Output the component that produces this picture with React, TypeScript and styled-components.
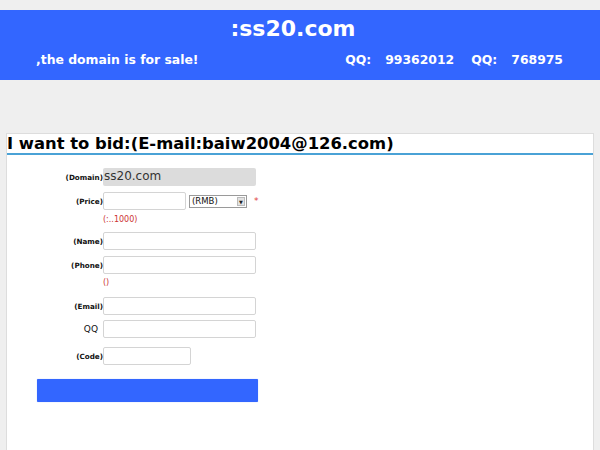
import React from "react";
import styled, { createGlobalStyle } from "styled-components";

const GlobalStyle = createGlobalStyle`
  html, body {
    margin: 0;
    padding: 0;
    background: #efefef;
    font-family: "DejaVu Sans", Verdana, sans-serif;
  }
`;

const Page = styled.div`
  padding-top: 10px;
  min-height: 440px;
`;

const Header = styled.header`
  background: #3366ff;
  height: 70px;
  color: #fff;
  display: flex;
  flex-direction: column;
`;

const SiteTitle = styled.h1`
  margin: 0;
  padding: 4px 14px 0 0;
  height: 30px;
  font-size: 22px;
  line-height: 30px;
  font-weight: bold;
  text-align: center;
`;

const InfoBar = styled.div`
  display: flex;
  justify-content: space-between;
  align-items: center;
  padding: 8px 37px 0 36px;
  font-size: 12.4px;
  font-weight: bold;
`;

const Contacts = styled.div`
  display: flex;
  gap: 17px;
`;

const Contact = styled.span`
  display: flex;
  gap: 14px;
`;

const Panel = styled.section`
  margin: 53px 6px 0 6px;
  background: #fff;
  border: 1px solid #dddddd;
  border-bottom: none;
  min-height: 320px;
`;

const PanelTitle = styled.h2`
  margin: 0;
  padding: 1px 0 0 0;
  font-size: 16.4px;
  line-height: 18px;
  font-weight: bold;
  color: #000;
  border-bottom: 2px solid #4aa2d6;
`;

const Form = styled.form`
  display: flex;
  flex-direction: column;
  padding: 13px 0 0 0;
`;

const Row = styled.div<{ $top?: number }>`
  display: grid;
  grid-template-columns: 96px auto;
  align-items: center;
  margin-top: ${({ $top }) => $top ?? 6}px;
`;

const Label = styled.label<{ $plain?: boolean }>`
  text-align: right;
  font-size: ${({ $plain }) => ($plain ? "9px" : "7.2px")};
  font-weight: ${({ $plain }) => ($plain ? "normal" : "bold")};
  color: #111;
  padding-right: ${({ $plain }) => ($plain ? "5px" : "0")};
`;

const Field = styled.div`
  display: flex;
  align-items: center;
  gap: 3px;
`;

const Input = styled.input<{ $w?: number }>`
  box-sizing: border-box;
  width: ${({ $w }) => $w ?? 153}px;
  height: 18px;
  margin: 0;
  padding: 0 2px;
  border: 1px solid #d4d4d4;
  border-radius: 2px;
  background: #fff;
  font-family: "DejaVu Sans", sans-serif;
  font-size: 11px;
  outline: none;
`;

const ReadOnly = styled.div`
  box-sizing: border-box;
  width: 153px;
  height: 18px;
  padding-left: 1px;
  background: #dcdcdc;
  border-radius: 2px;
  font-size: 12px;
  line-height: 17px;
  color: #333;
`;

const SelectBox = styled.div`
  box-sizing: border-box;
  width: 58px;
  height: 13px;
  border: 1px solid #9a9a9a;
  display: flex;
  align-items: center;
  background: #fff;
`;

const SelectText = styled.span`
  flex: 1;
  font-size: 8.5px;
  padding-left: 2px;
  color: #111;
`;

const SelectArrow = styled.span`
  width: 8px;
  height: 9px;
  margin-right: 1px;
  background: #e2e2e2;
  border: 1px solid #bbb;
  box-sizing: border-box;
  font-size: 5px;
  line-height: 8px;
  text-align: center;
  color: #222;
`;

const Star = styled.span`
  color: #e04040;
  font-size: 9px;
  margin-left: 4px;
`;

const Hint = styled.div<{ $top?: number }>`
  margin: ${({ $top }) => $top ?? 3}px 0 0 96px;
  font-size: 8px;
  line-height: 10px;
  color: #cc3333;
  height: 10px;
`;

const Submit = styled.button`
  margin: 14px 0 0 30px;
  width: 221px;
  height: 23px;
  border: none;
  border-radius: 1px;
  background: #3366ff;
  box-shadow: 0 0 1px #8aa8ff;
  cursor: pointer;
`;

export default function App() {
  return (
    <Page>
      <GlobalStyle />
      <Header>
        <SiteTitle>:ss20.com</SiteTitle>
        <InfoBar>
          <span>,the domain is for sale!</span>
          <Contacts>
            <Contact>
              <span>QQ:</span>
              <span>99362012</span>
            </Contact>
            <Contact>
              <span>QQ:</span>
              <span>768975</span>
            </Contact>
          </Contacts>
        </InfoBar>
      </Header>
      <Panel>
        <PanelTitle>I want to bid:(E-mail:baiw2004@126.com)</PanelTitle>
        <Form onSubmit={(e) => e.preventDefault()}>
          <Row $top={0}>
            <Label>(Domain)</Label>
            <ReadOnly>ss20.com</ReadOnly>
          </Row>
          <Row>
            <Label>(Price)</Label>
            <Field>
              <Input $w={83} />
              <SelectBox>
                <SelectText>(RMB)</SelectText>
                <SelectArrow>▼</SelectArrow>
              </SelectBox>
              <Star>*</Star>
            </Field>
          </Row>
          <Hint $top={5}>(:..1000)</Hint>
          <Row $top={7}>
            <Label>(Name)</Label>
            <Input />
          </Row>
          <Row>
            <Label>(Phone)</Label>
            <Input />
          </Row>
          <Hint $top={4}>()</Hint>
          <Row $top={9}>
            <Label>(Email)</Label>
            <Input />
          </Row>
          <Row $top={5}>
            <Label $plain>QQ</Label>
            <Input />
          </Row>
          <Row $top={9}>
            <Label>(Code)</Label>
            <Input $w={88} />
          </Row>
          <Submit type="submit" />
        </Form>
      </Panel>
    </Page>
  );
}
